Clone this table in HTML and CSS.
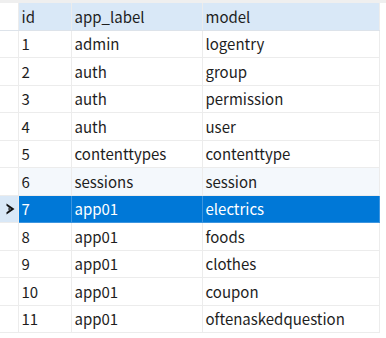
FILE: index.html
```html
<!DOCTYPE html>
<html lang="zh">
<head>
  <meta charset="UTF-8">
  <title>django_content_type</title>
  <link rel="stylesheet" href="styles.css">
</head>
<body>
  <div class="top-strip"></div>
  <table class="grid">
    <colgroup>
      <col class="c-ind">
      <col class="c-id">
      <col class="c-label">
      <col class="c-model">
    </colgroup>
    <thead>
      <tr>
        <th class="ind"></th>
        <th>id</th>
        <th>app_label</th>
        <th>model</th>
      </tr>
    </thead>
    <tbody>
      <tr><td class="ind"></td><td>1</td><td>admin</td><td>logentry</td></tr>
      <tr><td class="ind"></td><td>2</td><td>auth</td><td>group</td></tr>
      <tr><td class="ind"></td><td>3</td><td>auth</td><td>permission</td></tr>
      <tr><td class="ind"></td><td>4</td><td>auth</td><td>user</td></tr>
      <tr><td class="ind"></td><td>5</td><td>contenttypes</td><td>contenttype</td></tr>
      <tr class="hover"><td class="ind"></td><td>6</td><td>sessions</td><td>session</td></tr>
      <tr class="selected">
        <td class="ind">
          <svg width="9" height="12" viewBox="0 0 9 12"><path d="M0.5 0.5 L8.5 6 L0.5 11.5 L0.5 9.2 L5 6 L0.5 2.8 Z M2.5 4.6 L4.3 6 L2.5 7.4 Z" fill="#111"/></svg>
        </td>
        <td>7</td><td>app01</td><td>electrics</td>
      </tr>
      <tr><td class="ind"></td><td>8</td><td>app01</td><td>foods</td></tr>
      <tr><td class="ind"></td><td>9</td><td>app01</td><td>clothes</td></tr>
      <tr><td class="ind"></td><td>10</td><td>app01</td><td>coupon</td></tr>
      <tr><td class="ind"></td><td>11</td><td>app01</td><td>oftenaskedquestion</td></tr>
    </tbody>
  </table>
</body>
</html>
```

FILE: styles.css
```css
* {
  box-sizing: border-box;
}
body {
  margin: 0;
  background: #fff;
  font-family: "Noto Sans CJK SC", "Noto Sans", sans-serif;
  font-size: 15px;
  color: #1e1e1e;
}
.top-strip {
  height: 3px;
  background: #efefef;
}
.grid {
  border-collapse: collapse;
  table-layout: fixed;
  width: 379px;
}
.c-ind { width: 18px; }
.c-id { width: 53px; }
.c-label { width: 131px; }
.c-model { width: 177px; }
.grid th,
.grid td {
  height: 27.5px;
  padding: 0 0 0 3px;
  text-align: left;
  font-weight: normal;
  white-space: nowrap;
  border: 1px solid #ececec;
  border-top: none;
  line-height: 1;
}
.grid th {
  height: 27px;
  background: #d9e8f7;
  border-bottom-color: #dde3ea;
}
.grid th.ind,
.grid td.ind {
  background: #fff;
  padding: 0;
  text-align: center;
  border-left: none;
}
.grid tr.hover td {
  background: #f4f8fc;
}
.grid tr.hover td.ind {
  background: #fff;
}
.grid tr.selected td {
  background: #0078d7;
  color: #fff;
  border-color: #3d95df;
}
.grid tr.selected td.ind {
  background: #d9e8f7;
  border-color: #ececec;
}
.grid td.ind svg {
  display: block;
  margin: 0 0 0 6px;
}
```
